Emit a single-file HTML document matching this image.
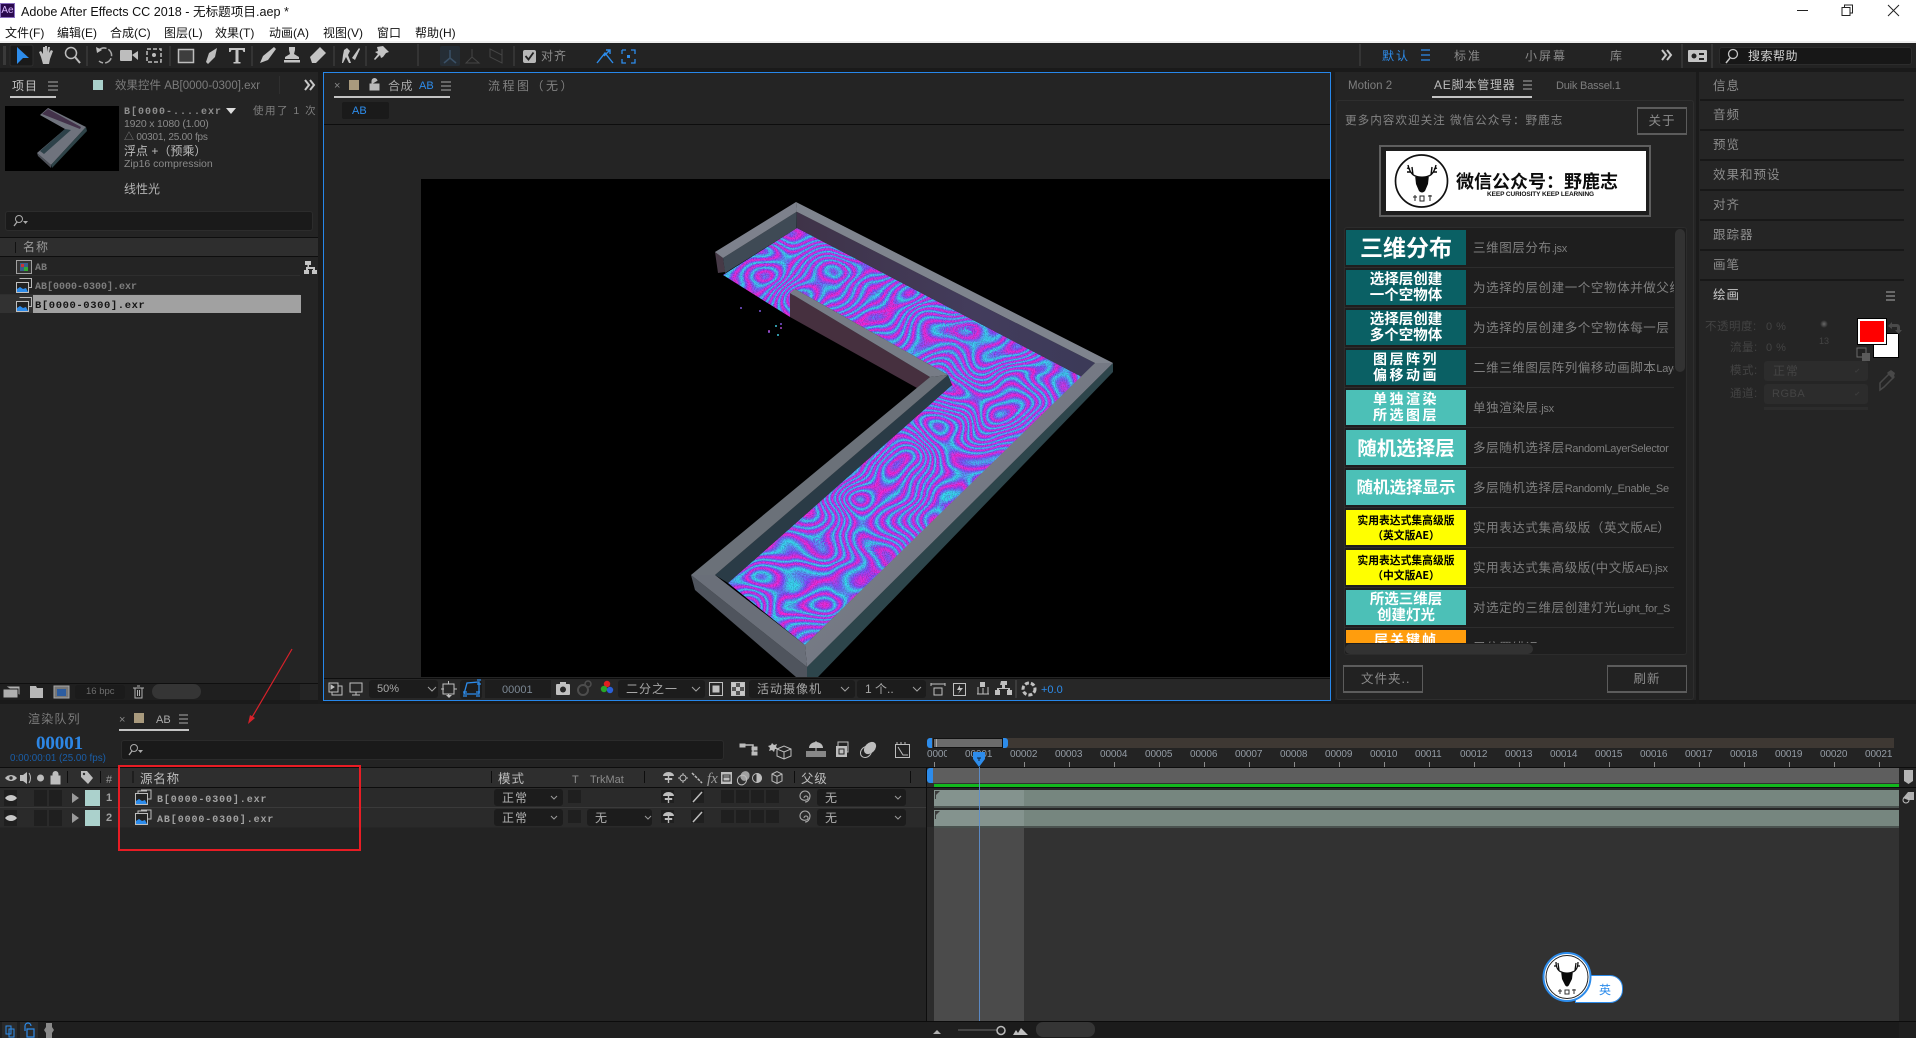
<!DOCTYPE html>
<html lang="zh"><head><meta charset="utf-8"><title>Adobe After Effects CC 2018</title>
<style>
html,body{margin:0;padding:0;background:#232323;}
body{position:relative;width:1916px;height:1038px;overflow:hidden;font-family:"Liberation Sans","WenQuanYi Zen Hei","Noto Sans CJK SC",sans-serif;font-size:12px;color:#8a8a8a;}
.b,.t,svg.a{position:absolute;}
.t{white-space:nowrap;line-height:16px;height:16px;}
.m{font-family:"Liberation Mono","WenQuanYi Zen Hei",monospace;font-weight:bold;}
.dd{position:absolute;background:#1c1c1c;border-radius:3px;color:#b0b0b0;font-size:12px;line-height:19px;padding-left:8px;box-sizing:border-box;white-space:nowrap;}
.sep{position:absolute;left:1700px;width:204px;height:2px;background:#181818;}
.rp{position:absolute;left:1713px;font-size:12.5px;letter-spacing:1px;line-height:16px;color:#8c8c8c;white-space:nowrap;}
.img{position:absolute;left:1346px;width:120px;height:35px;text-align:center;font-weight:bold;color:#fff;font-family:"Noto Sans CJK SC",sans-serif;overflow:hidden;}
.dk{background:#0a6064;}.lt{background:#4cc0b7;}.ye{background:#ffff00;color:#000;}
.rt{position:absolute;left:1473px;width:201px;overflow:hidden;white-space:nowrap;font-size:12.5px;letter-spacing:.6px;line-height:16px;color:#7f7f7f;}
.rt span{font-size:11px;letter-spacing:-.3px;}
.rs{position:absolute;left:1344px;width:330px;height:1px;background:#2d2d2d;}
.rl{position:absolute;top:747px;font-size:10px;line-height:16px;color:#949ca5;letter-spacing:-.1px;white-space:nowrap;}
.tk{position:absolute;top:762px;width:1px;height:5px;background:#8a8a8a;}
.bx{position:absolute;background:#1f1f1f;}
</style></head><body>

<!-- title bar -->
<div class="b" style="left:0;top:0;width:1916px;height:42px;background:#fff;"></div>
<div class="b" style="left:0;top:41px;width:1916px;height:2px;background:#efefef;"></div>
<div class="b" style="left:0;top:3px;width:15px;height:15px;background:#2a0a4e;border:1px solid #8a6fc0;box-sizing:border-box;color:#d9b8ff;font-size:10px;line-height:13px;text-align:center;">Ae</div>
<div class="t" style="left:21px;top:4px;color:#111;font-size:12.6px;">Adobe After Effects CC 2018 - 无标题项目.aep *</div>
<div class="t" style="left:5px;top:25px;color:#111;">文件(F)</div>
<div class="t" style="left:57px;top:25px;color:#111;">编辑(E)</div>
<div class="t" style="left:110px;top:25px;color:#111;">合成(C)</div>
<div class="t" style="left:164px;top:25px;color:#111;">图层(L)</div>
<div class="t" style="left:215px;top:25px;color:#111;">效果(T)</div>
<div class="t" style="left:269px;top:25px;color:#111;">动画(A)</div>
<div class="t" style="left:323px;top:25px;color:#111;">视图(V)</div>
<div class="t" style="left:377px;top:25px;color:#111;">窗口</div>
<div class="t" style="left:415px;top:25px;color:#111;">帮助(H)</div>
<svg class="a" style="left:1790px;top:0" width="126" height="20" viewBox="0 0 126 20" fill="none" stroke="#222" stroke-width="1">
<path d="M7 10.5h11"/><path d="M52 7.500h8v8h-8zM54.500 7.500v-2.500h8v8h-2.500"/><path d="M98 5l11 11M109 5l-11 11"/></svg>

<!-- toolbar -->
<div class="b" style="left:0;top:43px;width:1916px;height:25px;background:#232323;"></div>
<div class="b" style="left:0;top:68px;width:1916px;height:4px;background:#1a1a1a;"></div>
<div class="t" style="left:541px;top:48px;color:#8c8c8c;letter-spacing:1px;">对齐</div>
<div class="t" style="left:1382px;top:48px;color:#2d8ceb;letter-spacing:2px;">默认</div>
<div class="t" style="left:1454px;top:48px;color:#8a8a8a;letter-spacing:2px;">标准</div>
<div class="t" style="left:1525px;top:48px;color:#8a8a8a;letter-spacing:2px;">小屏幕</div>
<div class="t" style="left:1610px;top:48px;color:#8a8a8a;">库</div>
<div class="b" style="left:1719px;top:47px;width:193px;height:18px;background:#171717;border:1px solid #2c2c2c;border-radius:3px;box-sizing:border-box;"></div>
<div class="t" style="left:1748px;top:48px;color:#d0d0d0;font-size:12px;letter-spacing:.5px;">搜索帮助</div>
<svg class="a" style="left:0;top:43px" width="1916" height="26" viewBox="0 43 1916 26">
<rect x="10" y="45" width="23" height="21" rx="2" fill="#1a1a1a" stroke="#2e2e2e"/>
<path d="M17 47l12 11h-6l-6 6z" fill="#2d8ceb"/>
<rect x="3" y="46" width="3" height="19" fill="#3a3a3a"/>
<path d="M41 57l-2-5 2-1 2 3v-7l2 0 0 5 0-6 2 0 0 6 1-5 2 0-1 6 2-3 2 1-3 8-1 5h-6z" fill="#bdbdbd"/>
<circle cx="71" cy="53" r="5.500" fill="none" stroke="#bdbdbd" stroke-width="1.500"/><path d="M75 57l5 6" stroke="#bdbdbd" stroke-width="2"/>
<g stroke="#3a3a3a" stroke-width="1.500"><path d="M87 46v20M170 46v20M252 46v20M334 46v20M366 46v20M418 44v22M514 46v20M1360 44v22M1682 44v24M1712 44v24"/></g>
<path d="M99 50a7.500 7.500 0 1 1 0 11" fill="none" stroke="#a8a8a8" stroke-width="1.500" stroke-dasharray="8 2"/><path d="M96 47l1 6 5-3z" fill="#bdbdbd"/>
<rect x="120" y="50" width="12" height="11" rx="1" fill="#bdbdbd"/><path d="M132 55l6-4v9z" fill="#bdbdbd"/>
<rect x="147" y="49" width="14" height="13" fill="none" stroke="#bdbdbd" stroke-width="1.500" stroke-dasharray="4 2"/><circle cx="154" cy="55" r="2" fill="#bdbdbd"/>
<rect x="178.500" y="49.500" width="15" height="13" fill="#3d3d3d" stroke="#bdbdbd" stroke-width="1.500"/>
<path d="M206 62l3-9 8-5-2 9-7 7z" fill="#bdbdbd"/>
<path d="M229 48h16v4h-1.500l-1-2h-4v12h2v1.500h-7v-1.500h2v-12h-4l-1 2h-1.500z" fill="#c4c4c4"/>
<path d="M260 63l3-7 11-9 2 2-8 11z" fill="#c4c4c4"/>
<path d="M289 47h6v3l-1 4 5 3v2h-14v-2l5-3-1-4zM284 60h16v2.500h-16z" fill="#c4c4c4"/>
<path d="M310 57l10-10 6 6-10 10h-4z" fill="#c4c4c4"/>
<path d="M344 50l3-2 3 3-2 4 3 8h-2l-3-6-3 6h-1l1-8zM352 58l7-10 1 1-5 11z" fill="#c4c4c4"/>
<path d="M377 47l6-1 6 6-3 1-3 4-2 1-1-3-5 5-1-1 4-5-3-2 3-1z" fill="#c4c4c4"/>
<rect x="440" y="46" width="20" height="20" rx="2" fill="#252d35"/>
<path d="M450 50v8l-6 5M450 58l6 5" stroke="#3a5066" stroke-width="1.500" fill="none"/><path d="M472 49v8l-6 6h13l-7-6" stroke="#454545" fill="none"/><path d="M490 49l12 6v8l-12-6zM502 49v14" stroke="#454545" fill="none"/>
<rect x="523" y="50" width="13" height="13" rx="2" fill="#b8b8b8"/><path d="M525.500 56l3 3.500 5-7" stroke="#222" stroke-width="1.800" fill="none"/>
<path d="M597 63l8-10 8 10M604 56l6-6m-4 0h4v4" stroke="#2d8ceb" stroke-width="1.400" fill="none"/>
<path d="M622 50h4m5 0h4v4m0 5v4h-4m-5 0h-4v-4m0-5v-4" stroke="#2d8ceb" stroke-width="1.300" fill="none"/><rect x="627" y="55" width="3" height="3" fill="#2d8ceb"/>
<path d="M1421 50h9M1421 55h9M1421 60h9" stroke="#2d8ceb" stroke-width="1.300"/>
<path d="M1662 50l4 5-4 5M1667 50l4 5-4 5" stroke="#c8c8c8" stroke-width="2" fill="none"/>
<rect x="1688" y="50" width="19" height="12" rx="1" fill="#c4c4c4"/><circle cx="1694" cy="56" r="2.500" fill="#232323"/><path d="M1699 53h5v2h-5zM1699 58h5v2h-5z" fill="#232323"/>
<circle cx="1733" cy="54" r="4.500" fill="none" stroke="#c4c4c4" stroke-width="1.300"/><path d="M1730 58l-4 5" stroke="#c4c4c4" stroke-width="1.500"/>
</svg>

<!-- gap -->
<div class="b" style="left:0;top:700px;width:1916px;height:4px;background:#1a1a1a;"></div>

<!-- project panel -->
<div class="b" style="left:0;top:72px;width:320px;height:628px;background:#242424;"></div>
<div class="b" style="left:318px;top:72px;width:5px;height:632px;background:#1b1b1b;"></div>
<div class="t" style="left:12px;top:78px;color:#c2c2c2;letter-spacing:1px;">项目</div>
<div class="b" style="left:10px;top:96px;width:46px;height:2px;background:#c4c4c4;"></div>
<div class="b" style="left:93px;top:80px;width:10px;height:10px;background:#a9d0cb;"></div>
<div class="t" style="left:115px;top:78px;color:#7c7c7c;font-size:11.500px;">效果控件 AB[0000-0300].exr</div>
<div class="b" style="left:5px;top:106px;width:114px;height:65px;background:#000;"></div>
<svg class="a" style="left:5px;top:106px" width="114" height="65" viewBox="5 106 114 65">
<path d="M48 108l38 19-35 38-14-12 28-24-25-14z" fill="#6f737d"/><path d="M42 114l6-5 33 18-1 2z" fill="#43324a"/><path d="M65 129l-25 22 4 3 27-24z" fill="#2d4149"/><path d="M86 127l1 4-35 37-1-3z" fill="#2e4348"/><path d="M37 153l1 3 13 12v-3z" fill="#4c5058"/></svg>
<div class="t m" style="left:124px;top:105px;font-size:10px;color:#8e8e8e;letter-spacing:1px;">B[0000-....exr</div>
<div class="t" style="left:253px;top:103px;color:#7e7e7e;font-size:10.5px;letter-spacing:1.500px;">使用了 1 次</div>
<svg class="a" style="left:226px;top:108px" width="10" height="8"><path d="M0 0h10l-5 6z" fill="#ddd"/></svg>
<div class="t" style="left:124px;top:116px;font-size:10.5px;letter-spacing:-.2px;color:#8a8a8a;">1920 x 1080 (1.00)</div>
<div class="t" style="left:124px;top:130px;font-size:10px;color:#8a8a8a;letter-spacing:-.2px;">△ 00301, 25.00 fps</div>
<div class="t" style="left:124px;top:143px;font-size:12px;color:#bbb;">浮点 +（预乘）</div>
<div class="t" style="left:124px;top:156px;font-size:10.5px;color:#8a8a8a;">Zip16 compression</div>
<div class="t" style="left:124px;top:181px;color:#b4b4b4;font-size:12px;">线性光</div>
<div class="b" style="left:5px;top:211px;width:308px;height:20px;background:#1a1a1a;border:1px solid #2c2c2c;border-radius:3px;box-sizing:border-box;"></div>
<svg class="a" style="left:12px;top:214px" width="18" height="14"><circle cx="7" cy="5" r="3.500" fill="none" stroke="#aaa"/><path d="M5 8l-3 4" stroke="#aaa" stroke-width="1.300"/><path d="M11 7h5l-2.500 3z" fill="#aaa"/></svg>
<div class="b" style="left:0;top:237px;width:318px;height:20px;background:#2e2e2e;border-top:1px solid #0e0e0e;border-bottom:1px solid #0e0e0e;box-sizing:border-box;"></div>
<div class="b" style="left:15px;top:242px;width:1px;height:11px;background:#111;"></div>
<div class="t" style="left:23px;top:239px;color:#9a9a9a;letter-spacing:1px;">名称</div>
<div class="b" style="left:0;top:275px;width:300px;height:1px;background:#2e2e2e;"></div>
<div class="b" style="left:0;top:294px;width:300px;height:1px;background:#2e2e2e;"></div>
<div class="b" style="left:0;top:295px;width:33px;height:18px;background:#323232;"></div>
<div class="b" style="left:33px;top:295px;width:268px;height:18px;background:#a1a1a1;"></div>
<div class="t m" style="left:35px;top:261px;font-size:10px;color:#7a7a7a;">AB</div>
<div class="t m" style="left:35px;top:280px;font-size:10px;color:#7d7d7d;">AB[0000-0300].exr</div>
<div class="t m" style="left:35px;top:298px;font-size:10.500px;color:#151515;letter-spacing:.6px;">B[0000-0300].exr</div>
<svg class="a" style="left:0;top:255px" width="320" height="60" viewBox="0 255 320 60">
<rect x="16.500" y="260.500" width="15" height="13" fill="#333" stroke="#a0a0a0"/><rect x="20" y="263" width="8" height="8" fill="#395f8d"/><path d="M21 264h3v3h-3z" fill="#c33"/><path d="M24 267h4v4h-4z" fill="#3a3"/>
<g><path d="M19.500 278.500h12v9h-3" fill="none" stroke="#b8b8b8"/><rect x="16.500" y="282.500" width="12" height="10" fill="#222" stroke="#c0c0c0"/><path d="M17 292v-3l3-2 3 2 3-1 2 4z" fill="#2d8ceb"/></g>
<g transform="translate(0,19)"><path d="M19.500 278.500h12v9h-3" fill="none" stroke="#b8b8b8"/><rect x="16.500" y="282.500" width="12" height="10" fill="#222" stroke="#c0c0c0"/><path d="M17 292v-3l3-2 3 2 3-1 2 4z" fill="#2d8ceb"/></g>
<path d="M305 261h6v4h-2v2h6v3h2v4h-5v-4h1v-1h-5v1h1v4h-5v-4h2v-3h1.500v-2h-2.500z" fill="#c4c4c4"/>
</svg>
<svg class="a" style="left:46px;top:79px" width="14" height="14"><path d="M2 3h10M2 7h10M2 11h10" stroke="#aaa" stroke-width="1"/></svg>
<svg class="a" style="left:304px;top:78px" width="14" height="14"><path d="M1 2l4 5-4 5M6 2l4 5-4 5" stroke="#c8c8c8" stroke-width="2" fill="none"/></svg>
<div class="b" style="left:279px;top:76px;width:1px;height:18px;background:#2f2f2f;"></div>
<!-- project footer -->
<div class="b" style="left:0;top:683px;width:318px;height:1px;background:#0f0f0f;"></div>
<div class="b" style="left:0;top:684px;width:300px;height:16px;background:#1f1f1f;"></div>
<div class="b" style="left:75px;top:685px;width:50px;height:14px;background:#1b1b1b;border-radius:3px;"></div>
<div class="t" style="left:86px;top:684px;font-size:9.500px;color:#6e6e6e;">16 bpc</div>
<div class="b" style="left:152px;top:684px;width:49px;height:15px;background:#353535;border-radius:8px;"></div>
<svg class="a" style="left:0;top:684px" width="150" height="16" viewBox="0 684 150 16">
<path d="M3 689h15v9h-15zM6 686h14v9" fill="#b0b0b0" stroke="#1f1f1f"/>
<path d="M30 686h6l1 2h6v10h-13z" fill="#b8b8b8"/>
<rect x="54" y="686" width="15" height="12" fill="#777" stroke="#aaa"/><rect x="57" y="689" width="9" height="7" fill="#2d5da0"/>
<path d="M133 688h11M135 688v10h7v-10M137 686h3M137.500 690v6M139.500 690v6" stroke="#b0b0b0" fill="none"/>
</svg>

<!-- comp panel -->
<div class="b" style="left:323px;top:72px;width:1008px;height:629px;box-sizing:border-box;border:1px solid #2787ea;background:#242424;"></div>
<div class="t" style="left:334px;top:78px;color:#888;font-size:11px;">×</div>
<div class="b" style="left:349px;top:80px;width:10px;height:10px;background:#a99a7d;"></div>
<div class="t" style="left:388px;top:78px;color:#a8a8a8;letter-spacing:.5px;">合成</div>
<div class="t" style="left:419px;top:78px;color:#2d8ceb;font-size:11px;">AB</div>
<div class="t" style="left:488px;top:78px;color:#808080;letter-spacing:2.500px;">流程图（无）</div>
<div class="b" style="left:334px;top:96px;width:116px;height:2px;background:#c4c4c4;"></div>
<div class="b" style="left:342px;top:102px;width:47px;height:17px;background:#1a1a1a;border-radius:2px;"></div>
<div class="t" style="left:352px;top:103px;color:#2d8ceb;font-size:11px;">AB</div>
<div class="b" style="left:324px;top:124px;width:1006px;height:1px;background:#0d0d0d;"></div>
<svg class="a" style="left:368px;top:78px" width="14" height="14"><path d="M2 6h9v6h-9zM4 6v-3a2.500 2.500 0 0 1 5 0" stroke="#bbb" fill="#bbb"/></svg>
<svg class="a" style="left:439px;top:79px" width="14" height="14"><path d="M2 3h10M2 7h10M2 11h10" stroke="#aaa"/></svg>

<!-- viewer -->
<div class="b" style="left:421px;top:179px;width:909px;height:498px;background:#000;"></div>
<svg class="a" style="left:421px;top:179px" width="909" height="498" viewBox="421 179 909 498">
<defs>
<filter id="sw" x="680" y="215" width="420" height="440" filterUnits="userSpaceOnUse" color-interpolation-filters="sRGB">
<feTurbulence type="fractalNoise" baseFrequency="0.012 0.016" numOctaves="2" seed="7"/>
<feColorMatrix type="matrix" values="1.350 0 0 0 -.175  1.350 0 0 0 -.175  1.350 0 0 0 -.175  0 0 0 0 1"/>
<feComponentTransfer>
<feFuncR type="table" tableValues="1 .5 .2 .48 1 .5 .2 .48 1 .5 .2 .48 1 .5 .2 .48 1 .5 .2 .48 1 .5 .2 .48 1 .5 .2 .48 1 .5 .2 .48 1 .5 .2 .48 1 .5 .2 .48 1 .5 .2 .48 1 .5 .2 .48"/>
<feFuncG type="table" tableValues=".15 .3 .9 .35 .15 .3 .9 .35 .15 .3 .9 .35 .15 .3 .9 .35 .15 .3 .9 .35 .15 .3 .9 .35 .15 .3 .9 .35 .15 .3 .9 .35 .15 .3 .9 .35 .15 .3 .9 .35 .15 .3 .9 .35 .15 .3 .9 .35"/>
<feFuncB type="table" tableValues=".85 1 .95 1 .85 1 .95 1 .85 1 .95 1 .85 1 .95 1 .85 1 .95 1 .85 1 .95 1 .85 1 .95 1 .85 1 .95 1 .85 1 .95 1 .85 1 .95 1 .85 1 .95 1 .85 1 .95 1"/>
<feFuncA type="linear" slope="0" intercept="1"/>
</feComponentTransfer>
</filter>
<filter id="gr" x="680" y="215" width="420" height="440" filterUnits="userSpaceOnUse"><feTurbulence type="fractalNoise" baseFrequency="0.9" numOctaves="1" seed="3"/><feColorMatrix type="matrix" values="0 0 0 0 0 0 0 0 0 0 0 0 0 0 0 3 0 0 0 -1.200"/></filter>
<clipPath id="fl"><path d="M797 228L1082 377 805 645 728 583 952 385 948 375 795 289 790 317 723 275z"/></clipPath>
<linearGradient id="bw" x1="0" x2="1" y1="0" y2="0"><stop offset="0" stop-color="#3f3348"/><stop offset=".6" stop-color="#433c5c"/><stop offset="1" stop-color="#3b3a58"/></linearGradient>
<linearGradient id="rimg" x1="0" y1="0" x2="1" y2="1"><stop offset="0" stop-color="#7e828e"/><stop offset="1" stop-color="#6b7079"/></linearGradient>
</defs>
<g clip-path="url(#fl)"><rect x="680" y="215" width="420" height="440" filter="url(#sw)"/><rect x="680" y="215" width="420" height="440" filter="url(#gr)" opacity=".22"/></g>
<path d="M796.700 211.700L1095 363 1082 377 797 228z" fill="url(#bw)"/>
<path d="M796.700 211.700L723 258 725 273 796.700 228.300z" fill="#3f4a55"/>
<path d="M715 252L723 258 725 272 718 273z" fill="#473a47"/>
<path d="M691 575L695 590 796 677 807 677 807 667z" fill="#4f545d"/>
<path d="M807 667L807 677 818 677 1113 372 1113 363z" fill="#2d454b"/>
<path d="M715 575L948 375 952 385 728 583z" fill="#2a3b46"/>
<path d="M790 293L930 377 917 388 790 317z" fill="#46303f"/>
<path d="M796 202L1113 363 1095 363 796.700 211.700z" fill="#7f848e"/>
<path d="M796 202L796.700 211.700 723 258 715 252z" fill="#7d818c"/>
<path d="M1113 363L807 667 805 645 1095 363z" fill="url(#rimg)"/>
<path d="M807 667L691 575 715 575 805 645z" fill="#6a6f79"/>
<path d="M691 575L930 377 948 375 715 575z" fill="#6b7179"/>
<path d="M795 289L948 375 930 377 790 293z" fill="#777c86"/>
<g fill="#7c55d8"><circle cx="741" cy="308" r="1"/><circle cx="760" cy="311" r="1"/><circle cx="769" cy="332" r="1"/><circle cx="781" cy="324" r="1"/></g>
<g fill="#3ec4d8"><circle cx="776" cy="326" r="1"/><circle cx="778" cy="335" r="1"/></g>
<g fill="#a847c8"><circle cx="769" cy="331" r="1"/><circle cx="781" cy="328" r="1"/></g>
</svg>

<!-- viewer bar -->
<div class="b" style="left:324px;top:678px;width:1006px;height:22px;background:#272727;border-top:1px solid #0e0e0e;box-sizing:border-box;"></div>
<div class="dd" style="left:369px;top:680px;width:69px;height:18px;line-height:19px;color:#a8a8a8;font-size:11px;">50%</div>
<div class="b" style="left:460px;top:680px;width:22px;height:19px;background:#1c1c1c;border-radius:3px;"></div>
<div class="b" style="left:485px;top:680px;width:66px;height:18px;background:#1d1d1d;"></div>
<div class="t" style="left:502px;top:682px;color:#7c8894;font-size:11px;">00001</div>
<div class="dd" style="left:618px;top:680px;width:87px;height:18px;line-height:19px;color:#a8a8a8;letter-spacing:1px;">二分之一</div>
<div class="dd" style="left:749px;top:680px;width:106px;height:18px;line-height:19px;color:#a8a8a8;letter-spacing:1px;">活动摄像机</div>
<div class="dd" style="left:857px;top:680px;width:69px;height:18px;line-height:19px;color:#a8a8a8;">1 个..</div>
<div class="t" style="left:1041px;top:682px;color:#2d8ceb;font-size:11px;">+0.0</div>
<svg class="a" style="left:324px;top:678px" width="1006" height="22" viewBox="324 678 1006 22" fill="none" stroke="#c0c0c0">
<path d="M329 683h9v9h-9zM332 692v3h10v-9h-4" /><path d="M331 685l3 2-3 2z" fill="#c0c0c0"/>
<path d="M350 683h12v9h-12zM356 692v3M352 695h8"/>
<path d="M428 687l4 4 4-4M692 687l4 4 4-4M841 687l4 4 4-4M913 687l4 4 4-4" stroke="#a0a0a0"/>
<path d="M443 684h11v10h-11zM448.500 681v3M448.500 694v3M441 689h3M454 689h3"/><path d="M446 695h6l-3 3z" fill="#c0c0c0" stroke="none"/>
<path d="M464 694l3-11 12-1 0 12zM463 692h4M463 696h4M477 680h4M477 684h4M476 692h4M476 696h4" stroke="#2d8ceb" stroke-width="1.300"/>
<rect x="556" y="684" width="14" height="11" rx="1" fill="#c0c0c0" stroke="none"/><circle cx="563" cy="689.500" r="3" fill="#272727" stroke="none"/><rect x="560" y="682" width="6" height="3" fill="#c0c0c0" stroke="none"/>
<circle cx="583" cy="690" r="5" stroke="#4d4d4d" stroke-width="2"/><circle cx="588" cy="684" r="3" stroke="#4d4d4d" stroke-width="1.500"/>
<circle cx="607" cy="684" r="3.200" fill="#e02020" stroke="none"/><circle cx="604" cy="689" r="3.200" fill="#28a828" stroke="none"/><circle cx="610" cy="690" r="3.200" fill="#2a60d8" stroke="none"/>
<rect x="709.500" y="682.500" width="13" height="13" /><rect x="713" y="686" width="6" height="6" fill="#c0c0c0"/>
<rect x="731.500" y="682.500" width="13" height="13" fill="#555"/><path d="M732 683h4v4h-4zM740 683h4v4h-4zM736 687h4v4h-4zM732 691h4v4h-4zM740 691h4v4h-4z" fill="#c8c8c8" stroke="none"/>
<path d="M931 684h14M931 683v3M945 683v3M934 688h8v7h-8z"/><path d="M953.500 683.500h12v12h-12z"/><path d="M960 685l-3 5h3l-2 4 5-6h-3z" fill="#c0c0c0" stroke="none"/>
<path d="M977 694h12M978 694v-7M988 694v-7M983 694v-6"/><rect x="980" y="682" width="5" height="5" fill="#c0c0c0" stroke="none"/>
<path d="M1001 681h6v4h-2v3h5v2h2v5h-5v-5h1v-1h-9v1h1v5h-5v-5h2v-2h5v-3h-2z" fill="#c0c0c0" stroke="none"/>
<path d="M1016 680v18" stroke="#3c3c3c" stroke-width="2"/>
<circle cx="1029" cy="689" r="6" stroke-width="3" stroke="#c0c0c0" stroke-dasharray="4 2"/>
</svg>

<!-- script panel -->
<div class="b" style="left:1331px;top:72px;width:4px;height:632px;background:#1b1b1b;"></div>
<div class="b" style="left:1335px;top:72px;width:361px;height:628px;background:#242424;"></div>
<div class="b" style="left:1696px;top:72px;width:3px;height:632px;background:#1b1b1b;"></div>
<div class="t" style="left:1348px;top:78px;color:#7e7e7e;font-size:11.500px;">Motion 2</div>
<div class="t" style="left:1434px;top:77px;color:#bcbcbc;font-size:12px;letter-spacing:.8px;">AE脚本管理器</div>
<div class="t" style="left:1556px;top:78px;color:#7e7e7e;font-size:11px;letter-spacing:-.2px;">Duik Bassel.1</div>
<svg class="a" style="left:1522px;top:79px" width="12" height="12"><path d="M1 2h9M1 6h9M1 10h9" stroke="#aaa"/></svg>
<div class="b" style="left:1432px;top:96px;width:100px;height:2px;background:#c4c4c4;"></div>
<div class="b" style="left:1336px;top:100px;width:358px;height:600px;border:1px solid #2e2e2e;border-radius:3px;box-sizing:border-box;"></div>
<div class="t" style="left:1345px;top:113px;color:#838383;font-size:11.600px;letter-spacing:1px;">更多内容欢迎关注 微信公众号：野鹿志</div>
<div class="b" style="left:1637px;top:107px;width:50px;height:28px;border:1px solid #5c5c5c;box-sizing:border-box;border-width:2px 1px;color:#8c8c8c;text-align:center;line-height:24px;font-size:12.500px;letter-spacing:1px;background:#222;">关于</div>
<div class="b" style="left:1379px;top:145px;width:272px;height:72px;border:2px solid #5f5f5f;box-sizing:border-box;background:#1e1e1e;"></div>
<div class="b" style="left:1386px;top:151px;width:260px;height:60px;background:#fff;"></div>
<svg class="a" style="left:1386px;top:151px" width="70" height="60" viewBox="0 0 70 60">
<circle cx="35.500" cy="30" r="26" fill="#fff" stroke="#111" stroke-width="1.700"/>
<path d="M29 24c3 2 11 2 14 0l-1 9-3 7c-2 2-4 2-6 0l-3-7z" fill="#0a0a0a"/>
<path d="M29 25c-4-2-6-6-7-11M24 18l-3-1M25 21l-4 0M27 24l-1-8M43 25c4-2 6-6 7-11M48 18l3-1M47 21l4 0M45 24l1-8" stroke="#0a0a0a" stroke-width="1.400" fill="none"/>
<path d="M27 46h4M29 44v6M34 45h4v5h-4zM42 45h4M44 44v6" stroke="#222" fill="none"/></svg>
<div class="t" style="left:1456px;top:170px;height:22px;line-height:22px;color:#0c0c0c;font-family:'Noto Sans CJK SC',sans-serif;font-weight:bold;font-size:18px;">微信公众号：野鹿志</div>
<div class="t" style="left:1487px;top:187px;color:#111;font-weight:bold;font-size:6.500px;letter-spacing:-.1px;">KEEP CURIOSITY KEEP LEARNING</div>

<div class="b" style="left:1344px;top:227px;width:343px;height:428px;background:#1e1e1e;border:1px solid #2c2c2c;border-radius:3px;box-sizing:border-box;"></div>
<div class="b" style="left:1344px;top:228px;width:331px;height:415px;overflow:hidden;">
<div style="position:absolute;left:-1344px;top:-228px;width:1916px;height:1038px;">
<div class="img dk" style="top:230px;font-size:23px;line-height:33px;">三维分布</div>
<div class="img dk" style="top:270px;font-size:14.500px;line-height:16px;padding-top:1px;height:34px;">选择层创建<br>一个空物体</div>
<div class="img dk" style="top:310px;font-size:14.500px;line-height:16px;padding-top:1px;height:34px;">选择层创建<br>多个空物体</div>
<div class="img dk" style="top:350px;font-size:14px;line-height:16px;padding-top:1px;height:34px;letter-spacing:2.500px;">图层阵列<br>偏移动画</div>
<div class="img lt" style="top:390px;font-size:14px;line-height:16px;padding-top:1px;height:34px;letter-spacing:2.500px;">单独渲染<br>所选图层</div>
<div class="img lt" style="top:430px;font-size:19.500px;line-height:33px;">随机选择层</div>
<div class="img lt" style="top:470px;font-size:16.500px;line-height:33px;">随机选择显示</div>
<div class="img ye" style="top:510px;font-size:10.800px;line-height:15px;padding-top:3px;height:32px;">实用表达式集高级版<br>（英文版AE）</div>
<div class="img ye" style="top:550px;font-size:10.800px;line-height:15px;padding-top:3px;height:32px;">实用表达式集高级版<br>（中文版AE）</div>
<div class="img lt" style="top:590px;font-size:14.500px;line-height:16px;padding-top:1px;height:34px;">所选三维层<br>创建灯光</div>
<div class="img" style="top:630px;font-size:14px;line-height:20px;letter-spacing:2px;background:#ff9d0d;">层关键帧</div>
<div class="rt" style="top:240px;">三维图层分布<span>.jsx</span></div>
<div class="rt" style="top:280px;">为选择的层创建一个空物体并做父级</div>
<div class="rt" style="top:320px;">为选择的层创建多个空物体每一层</div>
<div class="rt" style="top:360px;">二维三维图层阵列偏移动画脚本<span>Layer</span></div>
<div class="rt" style="top:400px;">单独渲染层<span>.jsx</span></div>
<div class="rt" style="top:440px;">多层随机选择层<span>RandomLayerSelector</span></div>
<div class="rt" style="top:480px;">多层随机选择层<span>Randomly_Enable_Se</span></div>
<div class="rt" style="top:520px;">实用表达式集高级版（英文版<span>AE</span>）</div>
<div class="rt" style="top:560px;">实用表达式集高级版(中文版<span>AE).jsx</span></div>
<div class="rt" style="top:600px;">对选定的三维层创建灯光<span>Light_for_S</span></div>
<div class="rt" style="top:640px;">层位置错误</div>
<div class="rs" style="top:267px;"></div><div class="rs" style="top:307px;"></div><div class="rs" style="top:347px;"></div><div class="rs" style="top:387px;"></div><div class="rs" style="top:427px;"></div><div class="rs" style="top:467px;"></div><div class="rs" style="top:507px;"></div><div class="rs" style="top:547px;"></div><div class="rs" style="top:587px;"></div><div class="rs" style="top:627px;"></div>
</div></div>
<div class="b" style="left:1675px;top:229px;width:10px;height:143px;background:#323232;border-radius:5px;"></div>
<div class="b" style="left:1345px;top:644px;width:188px;height:10px;background:#323232;border-radius:5px;"></div>
<div class="b" style="left:1343px;top:665px;width:80px;height:28px;border:1px solid #5c5c5c;border-width:2px 1px;box-sizing:border-box;color:#8c8c8c;font-size:12.500px;line-height:24px;padding-left:17px;letter-spacing:1px;background:#222;">文件夹..</div>
<div class="b" style="left:1607px;top:665px;width:80px;height:28px;border:1px solid #5c5c5c;border-width:2px 1px;box-sizing:border-box;color:#8c8c8c;font-size:12.500px;line-height:24px;text-align:center;letter-spacing:1px;background:#222;">刷新</div>

<!-- right panel -->
<div class="b" style="left:1699px;top:72px;width:217px;height:628px;background:#252525;"></div>
<div class="rp" style="top:78px;">信息</div><div class="sep" style="top:99px;"></div>
<div class="rp" style="top:107px;">音频</div><div class="sep" style="top:129px;"></div>
<div class="rp" style="top:137px;">预览</div><div class="sep" style="top:159px;"></div>
<div class="rp" style="top:167px;">效果和预设</div><div class="sep" style="top:189px;"></div>
<div class="rp" style="top:197px;">对齐</div><div class="sep" style="top:219px;"></div>
<div class="rp" style="top:227px;">跟踪器</div><div class="sep" style="top:249px;"></div>
<div class="rp" style="top:257px;">画笔</div><div class="sep" style="top:279px;"></div>
<div class="rp" style="top:287px;color:#c8c8c8;">绘画</div>
<svg class="a" style="left:1885px;top:290px" width="12" height="12"><path d="M1 2h9M1 6h9M1 10h9" stroke="#aaa"/></svg>
<div class="t" style="left:1705px;top:319px;color:#434343;font-size:11.500px;letter-spacing:.5px;">不透明度:</div>
<div class="t" style="left:1766px;top:319px;color:#434343;font-size:11px;letter-spacing:.5px;">0 %</div>
<div class="t" style="left:1730px;top:340px;color:#434343;font-size:11.500px;letter-spacing:.5px;">流量:</div>
<div class="t" style="left:1766px;top:340px;color:#434343;font-size:11px;letter-spacing:.5px;">0 %</div>
<div class="t" style="left:1730px;top:363px;color:#434343;font-size:11.500px;letter-spacing:.5px;">模式:</div>
<div class="t" style="left:1730px;top:386px;color:#434343;font-size:11.500px;letter-spacing:.5px;">通道:</div>
<div class="b" style="left:1764px;top:361px;width:104px;height:20px;background:#2c2c2c;border-radius:3px;"></div>
<div class="b" style="left:1764px;top:384px;width:104px;height:20px;background:#2c2c2c;border-radius:3px;"></div>
<div class="b" style="left:1764px;top:407px;width:104px;height:3px;background:#2c2c2c;"></div>
<div class="t" style="left:1773px;top:363px;color:#444;font-size:12px;letter-spacing:1px;">正常</div>
<div class="t" style="left:1772px;top:386px;color:#444;font-size:11px;letter-spacing:.5px;">RGBA</div>
<div class="b" style="left:1820px;top:320px;width:8px;height:8px;background:radial-gradient(circle,#6a6a6a,#252525 70%);border-radius:50%;"></div>
<div class="t" style="left:1819px;top:333px;color:#444;font-size:9px;">13</div>
<div class="b" style="left:1873px;top:333px;width:26px;height:25px;background:#fff;border:1px solid #000;box-sizing:border-box;"></div>
<div class="b" style="left:1858px;top:319px;width:28px;height:25px;background:#f00;border:2px solid #fff;outline:1px solid #000;box-sizing:border-box;"></div>
<svg class="a" style="left:1855px;top:316px" width="60" height="100" viewBox="1855 316 60 100">
<path d="M1888 326l4-4v2h5a3 3 0 0 1 3 3v3h2l-3.500 4-3.500-4h2v-3h-5v2z" fill="#4a4a4a"/>
<rect x="1857" y="348" width="9" height="9" fill="#222" stroke="#6a6a6a"/><rect x="1862" y="353" width="8" height="8" fill="#5a5a5a"/>
<path d="M1880 383l9-9 4 4-9 9-4 3z" fill="none" stroke="#484848" stroke-width="1.500"/><path d="M1888 372l3-2 4 3-1 3 1 1-2 2-6-6z" fill="#484848"/>
<path d="M1857 369l-3 3-3-3M1857 392l-3 3-3-3" transform="translate(2,0)" stroke="#3c3c3c" fill="none"/>
</svg>

<!-- timeline panel -->
<div class="b" style="left:0;top:704px;width:1916px;height:334px;background:#232323;"></div>
<div class="t" style="left:28px;top:711px;color:#7c7c7c;letter-spacing:1.200px;">渲染队列</div>
<div class="t" style="left:119px;top:712px;color:#888;font-size:11px;">×</div>
<div class="b" style="left:134px;top:713px;width:10px;height:10px;background:#a99a7d;"></div>
<div class="t" style="left:156px;top:712px;color:#aaa;font-size:11px;">AB</div>
<svg class="a" style="left:178px;top:713px" width="12" height="12"><path d="M1 2h9M1 6h9M1 10h9" stroke="#aaa"/></svg>
<div class="b" style="left:119px;top:729px;width:70px;height:2px;background:#c4c4c4;"></div>
<div class="t" style="left:36px;top:736px;color:#2d86e4;font-family:'Liberation Serif',serif;font-weight:bold;font-size:19px;letter-spacing:-.1px;">00001</div>
<div class="t" style="left:10px;top:751px;color:#1a5ea8;font-size:9.800px;">0:00:00:01 (25.00 fps)</div>
<div class="b" style="left:121px;top:740px;width:603px;height:20px;background:#1a1a1a;border:1px solid #2b2b2b;border-radius:3px;box-sizing:border-box;"></div>
<svg class="a" style="left:127px;top:743px" width="18" height="14"><circle cx="7" cy="5" r="3.500" fill="none" stroke="#aaa"/><path d="M5 8l-3 4" stroke="#aaa" stroke-width="1.300"/><path d="M11 7h5l-2.500 3z" fill="#aaa"/></svg>

<svg class="a" style="left:730px;top:738px" width="185" height="24" viewBox="730 738 185 24" fill="none" stroke="#bdbdbd">
<g transform="translate(-9,0)"><path d="M749 745h8M757 745h5v8h4M762 748h4" stroke-width="1.500"/><path d="M749 744h5v3h-5zM761 747h5v3h-5zM761 752h5v3h-5z" fill="#bdbdbd"/></g>
<g transform="translate(-9,0)"><path d="M781 743l2 2 3-1-1 3 2 2-3 0-1 3-2-2-3 1 1-3-2-2 3-1z" fill="#bdbdbd" stroke="none"/><path d="M786 749l7-3 7 3v7l-7 3-7-3zM793 752v7M786 749l7 3 7-3"/></g>
<g transform="translate(-10,0)"><path d="M819 748a7 6 0 0 1 14 0z" fill="#bdbdbd" stroke="none"/><path d="M816 751h20v6h-20z" fill="#888" stroke="none"/><path d="M826 741v10" stroke-width="1"/></g>
<g transform="translate(-7,0)"><path d="M843 746h11v11h-11z" fill="#bdbdbd" stroke="none"/><path d="M845 742h9v4M846 749h5v5h-5z" stroke="#232323"/><path d="M845 746v-4h10v10h-1"/></g>
<g transform="translate(-6,0)"><ellipse cx="876" cy="748" rx="7" ry="5" transform="rotate(-45 876 748)" fill="#bdbdbd" stroke="none"/><ellipse cx="872" cy="752" rx="6" ry="5" transform="rotate(-45 872 752)"/></g>
<rect x="895.500" y="744.500" width="14" height="13"/><path d="M898 747l5 8h5"/><path d="M897 742v2M901 742v2M905 742v2"/>
</svg>
<!-- column header -->
<div class="b" style="left:0;top:767px;width:926px;height:21px;background:#2e2e2e;border-top:1px solid #0d0d0d;border-bottom:1px solid #0d0d0d;box-sizing:border-box;"></div>
<div class="b" style="left:0;top:788px;width:926px;height:39px;background:#2a2a2a;"></div>
<div class="b" style="left:0;top:807px;width:926px;height:1px;background:#3a3a3a;"></div>
<div class="b" style="left:0;top:827px;width:926px;height:1px;background:#262626;"></div>
<div class="t" style="left:140px;top:771px;color:#bdbdbd;font-size:12.500px;letter-spacing:.8px;">源名称</div>
<div class="t" style="left:498px;top:771px;color:#bdbdbd;font-size:12.500px;letter-spacing:1px;">模式</div>
<div class="t" style="left:572px;top:772px;color:#8a8a8a;font-size:11px;">T</div>
<div class="t" style="left:590px;top:772px;color:#8a8a8a;font-size:11px;">TrkMat</div>
<div class="t" style="left:801px;top:771px;color:#bdbdbd;font-size:12.500px;letter-spacing:.8px;">父级</div>
<div class="t" style="left:106px;top:772px;color:#9c9c9c;font-size:11px;">#</div>
<div class="t" style="left:707px;top:771px;color:#9c9c9c;font-family:'Liberation Serif',serif;font-style:italic;font-size:15px;">fx</div>

<div class="bx" style="left:4px;top:790px;width:13px;height:16px;"></div><div class="bx" style="left:4px;top:810px;width:13px;height:16px;"></div>
<div class="bx" style="left:34px;top:790px;width:13px;height:16px;"></div><div class="bx" style="left:34px;top:810px;width:13px;height:16px;"></div>
<div class="bx" style="left:49px;top:790px;width:13px;height:16px;"></div><div class="bx" style="left:49px;top:810px;width:13px;height:16px;"></div>
<div class="b" style="left:85px;top:790px;width:15px;height:16px;background:#abd1cc;"></div>
<div class="b" style="left:85px;top:810px;width:15px;height:16px;background:#abd1cc;"></div>
<div class="t" style="left:106px;top:790px;color:#a0a0a0;font-size:11px;font-weight:bold;">1</div>
<div class="t" style="left:106px;top:810px;color:#a0a0a0;font-size:11px;font-weight:bold;">2</div>
<div class="t m" style="left:157px;top:793px;font-size:10px;color:#a2a2a2;letter-spacing:.9px;">B[0000-0300].exr</div>
<div class="t m" style="left:157px;top:813px;font-size:10px;color:#a2a2a2;letter-spacing:.9px;">AB[0000-0300].exr</div>
<div class="dd" style="left:494px;top:789px;width:69px;height:17px;line-height:19px;letter-spacing:1px;">正常</div>
<div class="dd" style="left:494px;top:809px;width:69px;height:17px;line-height:19px;letter-spacing:1px;">正常</div>
<div class="bx" style="left:568px;top:790px;width:13px;height:13px;"></div><div class="bx" style="left:568px;top:810px;width:13px;height:13px;"></div>
<div class="dd" style="left:587px;top:809px;width:65px;height:17px;line-height:19px;">无</div>
<div class="bx" style="left:661px;top:790px;width:13px;height:13px;"></div><div class="bx" style="left:661px;top:810px;width:13px;height:13px;"></div>
<div class="bx" style="left:691px;top:790px;width:13px;height:13px;"></div><div class="bx" style="left:691px;top:810px;width:13px;height:13px;"></div>
<div class="bx" style="left:721px;top:790px;width:13px;height:13px;"></div><div class="bx" style="left:736px;top:790px;width:13px;height:13px;"></div><div class="bx" style="left:751px;top:790px;width:13px;height:13px;"></div><div class="bx" style="left:766px;top:790px;width:13px;height:13px;"></div>
<div class="bx" style="left:721px;top:810px;width:13px;height:13px;"></div><div class="bx" style="left:736px;top:810px;width:13px;height:13px;"></div><div class="bx" style="left:751px;top:810px;width:13px;height:13px;"></div><div class="bx" style="left:766px;top:810px;width:13px;height:13px;"></div>
<div class="dd" style="left:817px;top:789px;width:89px;height:17px;line-height:19px;">无</div>
<div class="dd" style="left:817px;top:809px;width:89px;height:17px;line-height:19px;">无</div>

<svg class="a" style="left:0;top:766px" width="926" height="62" viewBox="0 766 926 62" fill="none" stroke="#bdbdbd">
<g stroke="#0d0d0d" stroke-width="1"><path d="M67.500 771v12M100.500 771v12M133 771v12M491.500 771v12M644.500 771v12M794.500 771v12M910.500 771v12"/></g>
<path d="M5 778c3-4 9-4 12 0-3 4-9 4-12 0z" fill="#bdbdbd" stroke="none"/><circle cx="11" cy="778" r="1.700" fill="#2e2e2e" stroke="none"/>
<path d="M20 775h3l4-3v12l-4-3h-3z" fill="#bdbdbd" stroke="none"/><path d="M29 773c2 3 2 7 0 10" />
<circle cx="40.500" cy="778" r="3.500" fill="#bdbdbd" stroke="none"/>
<path d="M51 776h9v8h-9zM53 776v-2a2.500 2.500 0 0 1 5 0v2" fill="#bdbdbd"/>
<path d="M81 771h6l6 7-5 6-7-7z" fill="#bdbdbd" stroke="none"/><circle cx="84" cy="774" r="1.200" fill="#2e2e2e" stroke="none"/>
<path d="M5 798c3-4 9-4 12 0-3 4-9 4-12 0zM5 818c3-4 9-4 12 0-3 4-9 4-12 0z" fill="#c8c8c8" stroke="none"/>
<path d="M72 793l7 5-7 5zM72 813l7 5-7 5z" fill="#9a9a9a" stroke="none"/>
<g><path d="M141 790h10v9h-3"/><rect x="135.500" y="793.500" width="12" height="11" fill="#222"/><path d="M136 804v-3l3-2 3 2 3-1 2 4z" fill="#2d8ceb" stroke="none"/><path d="M138 793v-2h9"/></g>
<g transform="translate(0,20)"><path d="M141 790h10v9h-3"/><rect x="135.500" y="793.500" width="12" height="11" fill="#222"/><path d="M136 804v-3l3-2 3 2 3-1 2 4z" fill="#2d8ceb" stroke="none"/><path d="M138 793v-2h9"/></g>
<g fill="#bdbdbd" stroke="none"><path d="M663 776a5.500 4 0 0 1 11 0h-4.800v2h3v2h-3v3h-1.400v-3h-3v-2h3v-2z"/><path d="M663 796a5.500 4 0 0 1 11 0h-4.800v2h3v2h-3v3h-1.400v-3h-3v-2h3v-2z"/><path d="M663 816a5.500 4 0 0 1 11 0h-4.800v2h3v2h-3v3h-1.400v-3h-3v-2h3v-2z"/></g>
<circle cx="683" cy="778" r="3"/><path d="M683 773v2M683 781v2M678 778h2M686 778h2"/>
<path d="M692 773l10 10" stroke-width="1.500" stroke-dasharray="3 1"/>
<path d="M693 802l9-10M693 822l9-10" stroke-width="1.500"/>
<rect x="721" y="772" width="11" height="12" fill="#bdbdbd" stroke="none"/><path d="M723 775h7v6h-7zM723 777h7" stroke="#2e2e2e"/>
<ellipse cx="745" cy="776" rx="5" ry="4.500" transform="rotate(-60 745 776)" fill="#a0a0a0" stroke="none"/><ellipse cx="742" cy="780" rx="5" ry="4.500" transform="rotate(-60 742 780)"/>
<circle cx="757" cy="778" r="4.500" fill="#2e2e2e"/><path d="M757 773.500a4.500 4.500 0 0 1 0 9z" fill="#bdbdbd"/>
<path d="M772 774l5-2.500 5 2.500v7l-5 2.500-5-2.500zM777 776.500v7M772 774l5 2.500 5-2.500"/>
<g stroke="#aaa" stroke-width="1.100"><path d="M804 798a2 2 0 1 1 2 2c-3 1-6-1-6-4a5 5 0 0 1 10 0c0 3-2 6-5 6"/><path d="M804 818a2 2 0 1 1 2 2c-3 1-6-1-6-4a5 5 0 0 1 10 0c0 3-2 6-5 6"/></g>
<g stroke="#9a9a9a"><path d="M551 796l3 3 3-3M551 816l3 3 3-3M645 816l3 3 3-3M895 796l3 3 3-3M895 816l3 3 3-3"/></g>
</svg>

<!-- red annotations -->
<div class="b" style="left:118px;top:765px;width:243px;height:86px;border:2px solid #e81c24;box-sizing:border-box;"></div>
<svg class="a" style="left:240px;top:640px" width="60" height="90"><path d="M52 9L11 79" stroke="#d8212a" stroke-width="1.200"/><path d="M8 84l2-9 5 3z" fill="#d8212a"/></svg>

<!-- timeline right -->
<div class="b" style="left:926px;top:704px;width:990px;height:63px;background:#232323;"></div>
<div class="b" style="left:926px;top:767px;width:1px;height:254px;background:#0d0d0d;"></div>
<div class="b" style="left:930px;top:738px;width:964px;height:10px;background:#3e3833;"></div>
<div class="b" style="left:933px;top:738px;width:70px;height:10px;background:#6b6b6b;border:1px solid #111;box-sizing:border-box;"></div>
<div class="b" style="left:927px;top:738px;width:5px;height:10px;background:#2d8ceb;border-radius:3px 0 0 3px;"></div>
<div class="b" style="left:1003px;top:738px;width:5px;height:10px;background:#2d8ceb;border-radius:0 3px 3px 0;"></div>
<div class="b" style="left:936px;top:739px;width:1px;height:8px;background:#aaa;"></div>
<div class="b" style="left:927px;top:747px;width:20px;height:16px;overflow:hidden;"><div class="rl" style="top:0;left:0;">0000</div></div>
<div class="rl" style="left:965px;">00001</div><div class="rl" style="left:1010px;">00002</div><div class="rl" style="left:1055px;">00003</div><div class="rl" style="left:1100px;">00004</div><div class="rl" style="left:1145px;">00005</div><div class="rl" style="left:1190px;">00006</div><div class="rl" style="left:1235px;">00007</div><div class="rl" style="left:1280px;">00008</div><div class="rl" style="left:1325px;">00009</div><div class="rl" style="left:1370px;">00010</div><div class="rl" style="left:1415px;">00011</div><div class="rl" style="left:1460px;">00012</div><div class="rl" style="left:1505px;">00013</div><div class="rl" style="left:1550px;">00014</div><div class="rl" style="left:1595px;">00015</div><div class="rl" style="left:1640px;">00016</div><div class="rl" style="left:1685px;">00017</div><div class="rl" style="left:1730px;">00018</div><div class="rl" style="left:1775px;">00019</div><div class="rl" style="left:1820px;">00020</div><div class="rl" style="left:1865px;">00021</div>
<div class="tk" style="left:934px;"></div><div class="tk" style="left:1024px;"></div><div class="tk" style="left:1069px;"></div><div class="tk" style="left:1114px;"></div><div class="tk" style="left:1159px;"></div><div class="tk" style="left:1204px;"></div><div class="tk" style="left:1249px;"></div><div class="tk" style="left:1294px;"></div><div class="tk" style="left:1339px;"></div><div class="tk" style="left:1384px;"></div><div class="tk" style="left:1429px;"></div><div class="tk" style="left:1474px;"></div><div class="tk" style="left:1519px;"></div><div class="tk" style="left:1564px;"></div><div class="tk" style="left:1609px;"></div><div class="tk" style="left:1654px;"></div><div class="tk" style="left:1699px;"></div><div class="tk" style="left:1744px;"></div><div class="tk" style="left:1789px;"></div><div class="tk" style="left:1834px;"></div><div class="tk" style="left:1879px;"></div>

<div class="b" style="left:927px;top:768px;width:972px;height:253px;background:#323232;"></div>
<div class="b" style="left:927px;top:768px;width:7px;height:253px;background:#2c2c2c;"></div>
<div class="b" style="left:934px;top:827px;width:90px;height:194px;background:#4b4b4b;"></div>
<div class="b" style="left:927px;top:767px;width:989px;height:1px;background:#0d0d0d;"></div>
<div class="b" style="left:933px;top:768px;width:966px;height:15px;background:#5e5e5e;"></div>
<div class="b" style="left:927px;top:768px;width:6px;height:15px;background:#2d8ceb;border-radius:3px 0 0 3px;"></div>
<div class="b" style="left:934px;top:784px;width:965px;height:3px;background:#12b81e;"></div>
<div class="b" style="left:926px;top:787px;width:990px;height:1px;background:#0d0d0d;"></div>
<div class="b" style="left:927px;top:788px;width:972px;height:39px;background:#262626;"></div>
<div class="b" style="left:934px;top:790px;width:965px;height:16px;background:#76867f;"></div>
<div class="b" style="left:934px;top:806px;width:965px;height:2px;background:#4a524f;"></div>
<div class="b" style="left:934px;top:810px;width:965px;height:16px;background:#76867f;"></div>
<div class="b" style="left:934px;top:826px;width:965px;height:2px;background:#4a524f;"></div>
<div class="b" style="left:934px;top:790px;width:90px;height:16px;background:#84938e;"></div>
<div class="b" style="left:934px;top:810px;width:90px;height:16px;background:#84938e;"></div>
<svg class="a" style="left:934px;top:790px" width="8" height="40"><path d="M1 1h5L2 5v4H1zM1 21h5L2 25v4H1z" fill="#3a3a3a"/></svg>
<div class="b" style="left:979px;top:767px;width:1px;height:254px;background:#5c8fd0;opacity:.9;"></div>
<svg class="a" style="left:973px;top:752px" width="14" height="16"><path d="M0 0h12v7l-6 8-6-8z" fill="#2d8ceb"/><path d="M4 6h4M6 6v3" stroke="#123"/></svg>
<svg class="a" style="left:1900px;top:768px" width="16" height="50"><path d="M4 2h9v11l-4.500 3-4.500-3z" fill="#b4b4b4"/><path d="M3 30l5-6 0 8zM8 24h6v8h-6z" fill="#b0b0b0"/><circle cx="6" cy="32" r="3" fill="none" stroke="#bbb"/></svg>

<!-- bottom bar -->
<div class="b" style="left:0;top:1021px;width:1916px;height:17px;background:#1f1f1f;border-top:1px solid #0c0c0c;box-sizing:border-box;"></div>
<div class="b" style="left:1000px;top:1022px;width:899px;height:16px;background:#1b1b1b;"></div>
<div class="b" style="left:1036px;top:1022px;width:59px;height:15px;background:#353535;border-radius:7px;"></div>
<svg class="a" style="left:0;top:1022px" width="1040" height="16" viewBox="0 1022 1040 16" fill="none">
<rect x="2" y="1022" width="15" height="16" fill="#2a2a2a"/><rect x="20" y="1022" width="18" height="16" fill="#2a2a2a"/>
<path d="M6 1026h5v8h-5zM9 1029h5v8h-5z" stroke="#2d8ceb"/><path d="M25 1031v-5a3 3 0 0 1 6 0M27 1029h7v8h-7z" stroke="#2d8ceb" stroke-width="1.200"/>
<path d="M46 1023h6v4l2 3-2 3v5h-6v-5l-2-3 2-3z" fill="#8a8a8a"/>
<path d="M933 1034l4-4 4 4z" fill="#b0b0b0"/>
<path d="M958 1030h41" stroke="#444" stroke-width="2"/><circle cx="1001" cy="1030.500" r="4" stroke="#bbb" stroke-width="1.500" fill="#222"/>
<path d="M1013 1035l3-5 2 3 3-5 7 7z" fill="#c0c0c0"/>
</svg>

<!-- floating avatar -->
<div class="b" style="left:1575px;top:975px;width:48px;height:28px;background:#fff;border:1px solid #2d8ceb;border-radius:0 13px 13px 0;box-sizing:border-box;"></div>
<div class="t" style="left:1599px;top:982px;color:#2d8ceb;font-size:12px;">英</div>
<svg class="a" style="left:1541px;top:952px" width="52" height="52" viewBox="0 0 52 52">
<ellipse cx="26" cy="25" rx="23.500" ry="24" fill="#fff" stroke="#2d8ceb" stroke-width="2"/>
<ellipse cx="26" cy="25" rx="21" ry="21.500" fill="#fff" stroke="#222" stroke-width="1"/>
<path d="M20 19c3 2 9 2 12 0l-1 8-3 6c-1 2-3 2-4 0l-3-6z" fill="#0a0a0a"/>
<path d="M20 20c-4-2-5-6-5-10M16 14l-3 0M18 18l-1-7M32 20c4-2 5-6 5-10M36 14l3 0M34 18l1-7" stroke="#0a0a0a" stroke-width="1.200" fill="none"/>
<path d="M17 39h4M19 37v5M24 38h4v4h-4zM31 38h4M33 37v5" stroke="#333" fill="none"/>
</svg>
</body></html>
